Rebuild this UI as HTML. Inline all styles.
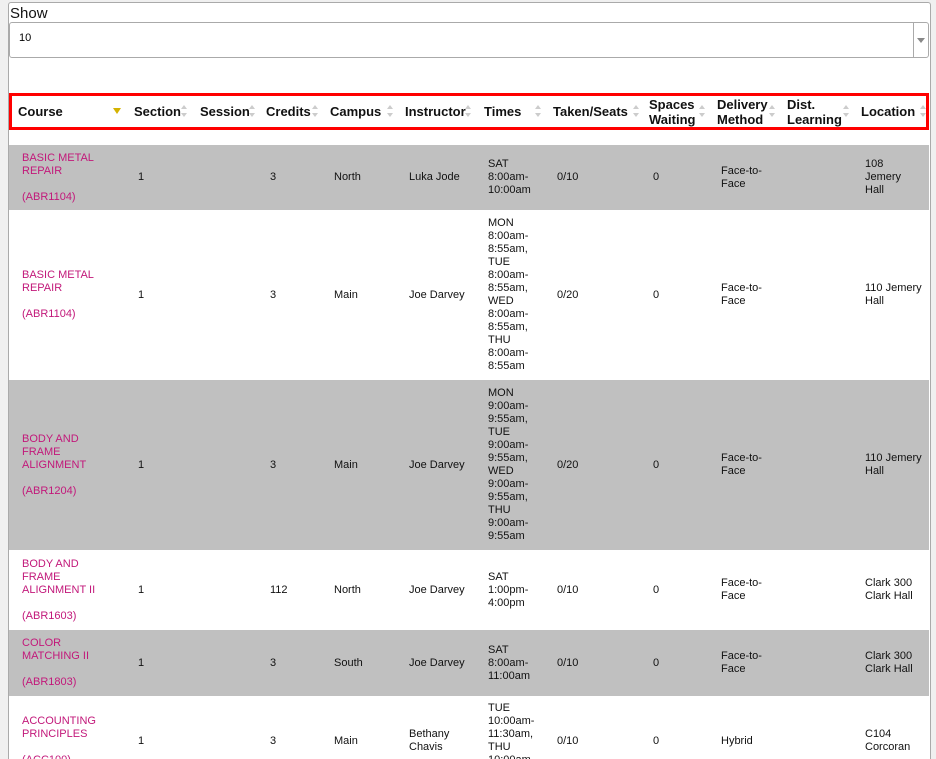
<!DOCTYPE html>
<html style="height:759px;overflow:hidden"><head><meta charset="utf-8"><style>
body{margin:0;width:936px;height:759px;overflow:hidden;background:#f0f0f0;font-family:"Liberation Sans",sans-serif;position:relative}
.wrap{position:absolute;left:8px;top:2px;width:921px;height:757px;background:#fff;border:1px solid #aaa;border-bottom:0;border-radius:3px 3px 0 0}
.show{position:absolute;left:10px;top:5px;font-size:15px;color:#111}
.sel{position:absolute;left:9px;top:22px;width:918px;height:34px;border:1px solid #aaa;border-radius:3px;background:#fff}
.sel span{position:absolute;left:9px;top:9px;font-size:11px}
.sel i{position:absolute;right:0;top:0;width:14px;height:34px;border-left:1px solid #aaa}
.sel i:after{content:"";position:absolute;left:3px;top:15px;border:4px solid transparent;border-top:5px solid #888}
.hdr{position:absolute;left:9px;top:93px;width:914px;height:31px;border:3px solid #f00;}
.h{position:absolute;top:0;height:31px;display:flex;align-items:center;font-weight:bold;font-size:13px;color:#111;line-height:15px;white-space:nowrap}
.ar{position:absolute;top:9px;width:6px;height:14px}
.ar:before{content:"";position:absolute;left:0;top:0;border:3px solid transparent;border-bottom:4px solid #ccc;border-top:0}
.ar:after{content:"";position:absolute;left:0;top:8px;border:3px solid transparent;border-top:4px solid #ccc;border-bottom:0}
.row{position:absolute;left:9px;width:920px;overflow:hidden}
.g{background:#c0c0c0}
.c{position:absolute;top:0;height:100%;display:flex;align-items:center;font-size:11px;line-height:13px;color:#111;white-space:nowrap}
.c.k{color:#c2187a}
</style></head><body>
<div class="wrap"></div>
<div class="show">Show</div>
<div class="sel"><span>10</span><i></i></div>
<div class="hdr">
<div class="h" style="left:6px">Course</div>
<div style="position:absolute;left:101px;top:12px;border:4px solid transparent;border-top:6px solid #d4b200"></div>
<div class="h" style="left:122px">Section</div><div class="ar" style="left:169px"></div>
<div class="h" style="left:188px">Session</div><div class="ar" style="left:237px"></div>
<div class="h" style="left:254px">Credits</div><div class="ar" style="left:300px"></div>
<div class="h" style="left:318px">Campus</div><div class="ar" style="left:375px"></div>
<div class="h" style="left:393px">Instructor</div><div class="ar" style="left:453px"></div>
<div class="h" style="left:472px">Times</div><div class="ar" style="left:523px"></div>
<div class="h" style="left:541px">Taken/Seats</div><div class="ar" style="left:621px"></div>
<div class="h" style="left:637px">Spaces<br>Waiting</div><div class="ar" style="left:687px"></div>
<div class="h" style="left:705px">Delivery<br>Method</div><div class="ar" style="left:757px"></div>
<div class="h" style="left:775px">Dist.<br>Learning</div><div class="ar" style="left:831px"></div>
<div class="h" style="left:849px">Location</div><div class="ar" style="left:908px"></div>
</div>

<div class="row g" style="top:145px;height:65px">
<div class="c k" style="left:13px">BASIC METAL<br>REPAIR<br><br>(ABR1104)</div>
<div class="c" style="left:129px">1</div><div class="c" style="left:261px">3</div>
<div class="c" style="left:325px">North</div><div class="c" style="left:400px">Luka Jode</div>
<div class="c" style="left:479px">SAT<br>8:00am-<br>10:00am</div>
<div class="c" style="left:548px">0/10</div><div class="c" style="left:644px">0</div>
<div class="c" style="left:712px">Face-to-<br>Face</div>
<div class="c" style="left:856px">108<br>Jemery<br>Hall</div>
</div>

<div class="row" style="top:210px;height:170px">
<div class="c k" style="left:13px">BASIC METAL<br>REPAIR<br><br>(ABR1104)</div>
<div class="c" style="left:129px">1</div><div class="c" style="left:261px">3</div>
<div class="c" style="left:325px">Main</div><div class="c" style="left:400px">Joe Darvey</div>
<div class="c" style="left:479px">MON<br>8:00am-<br>8:55am,<br>TUE<br>8:00am-<br>8:55am,<br>WED<br>8:00am-<br>8:55am,<br>THU<br>8:00am-<br>8:55am</div>
<div class="c" style="left:548px">0/20</div><div class="c" style="left:644px">0</div>
<div class="c" style="left:712px">Face-to-<br>Face</div>
<div class="c" style="left:856px">110 Jemery<br>Hall</div>
</div>

<div class="row g" style="top:380px;height:170px">
<div class="c k" style="left:13px">BODY AND<br>FRAME<br>ALIGNMENT<br><br>(ABR1204)</div>
<div class="c" style="left:129px">1</div><div class="c" style="left:261px">3</div>
<div class="c" style="left:325px">Main</div><div class="c" style="left:400px">Joe Darvey</div>
<div class="c" style="left:479px">MON<br>9:00am-<br>9:55am,<br>TUE<br>9:00am-<br>9:55am,<br>WED<br>9:00am-<br>9:55am,<br>THU<br>9:00am-<br>9:55am</div>
<div class="c" style="left:548px">0/20</div><div class="c" style="left:644px">0</div>
<div class="c" style="left:712px">Face-to-<br>Face</div>
<div class="c" style="left:856px">110 Jemery<br>Hall</div>
</div>

<div class="row" style="top:550px;height:80px">
<div class="c k" style="left:13px">BODY AND<br>FRAME<br>ALIGNMENT II<br><br>(ABR1603)</div>
<div class="c" style="left:129px">1</div><div class="c" style="left:261px">112</div>
<div class="c" style="left:325px">North</div><div class="c" style="left:400px">Joe Darvey</div>
<div class="c" style="left:479px">SAT<br>1:00pm-<br>4:00pm</div>
<div class="c" style="left:548px">0/10</div><div class="c" style="left:644px">0</div>
<div class="c" style="left:712px">Face-to-<br>Face</div>
<div class="c" style="left:856px">Clark 300<br>Clark Hall</div>
</div>

<div class="row g" style="top:630px;height:66px">
<div class="c k" style="left:13px">COLOR<br>MATCHING II<br><br>(ABR1803)</div>
<div class="c" style="left:129px">1</div><div class="c" style="left:261px">3</div>
<div class="c" style="left:325px">South</div><div class="c" style="left:400px">Joe Darvey</div>
<div class="c" style="left:479px">SAT<br>8:00am-<br>11:00am</div>
<div class="c" style="left:548px">0/10</div><div class="c" style="left:644px">0</div>
<div class="c" style="left:712px">Face-to-<br>Face</div>
<div class="c" style="left:856px">Clark 300<br>Clark Hall</div>
</div>

<div class="row" style="top:696px;height:63px">
<div class="c k" style="left:13px;height:90px">ACCOUNTING<br>PRINCIPLES<br><br>(ACC100)</div>
<div class="c" style="left:129px;height:90px">1</div><div class="c" style="left:261px;height:90px">3</div>
<div class="c" style="left:325px;height:90px">Main</div><div class="c" style="left:400px;height:90px">Bethany<br>Chavis</div>
<div class="c" style="left:479px;height:90px">TUE<br>10:00am-<br>11:30am,<br>THU<br>10:00am-<br>11:30am</div>
<div class="c" style="left:548px;height:90px">0/10</div><div class="c" style="left:644px;height:90px">0</div>
<div class="c" style="left:712px;height:90px">Hybrid</div>
<div class="c" style="left:856px;height:90px">C104<br>Corcoran</div>
</div>
</body></html>
